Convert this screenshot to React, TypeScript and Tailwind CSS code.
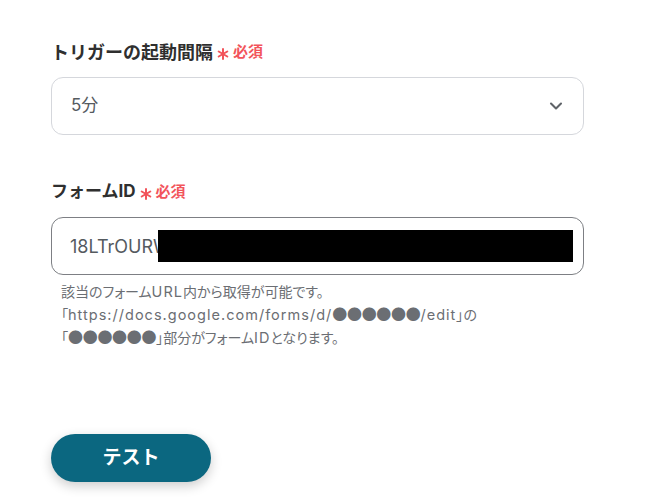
import { ChevronDown } from 'lucide-react';

const Required = () => (
  <span className="ml-[4px] inline-flex items-center text-[#f2545b] text-[15px] font-bold">
    <svg viewBox="0 0 12 12" className="w-[12px] h-[12px] mr-[4px] mt-[3px]" stroke="currentColor" strokeWidth="2" strokeLinecap="round">
      <line x1="6" y1="1" x2="6" y2="11" />
      <line x1="1.7" y1="3.5" x2="10.3" y2="8.5" />
      <line x1="1.7" y1="8.5" x2="10.3" y2="3.5" />
    </svg>
    必須
  </span>
);

const Latin = ({ children }: { children: React.ReactNode }) => (
  <span className="tracking-[0.07em] text-[14.5px]">{children}</span>
);

const Dots = () => (
  <span className="text-[15px] tracking-[-0.02em]" style={{ fontFamily: '"Noto Sans CJK JP", sans-serif' }}>
    ●●●●●●
  </span>
);

const App: React.FC = () => {
  return (
    <div
      className="w-[657px] h-[502px] bg-white pl-[51px] pt-[40px]"
      style={{ fontFamily: 'Inter, "Noto Sans CJK JP", sans-serif' }}
    >
      <div className="w-[533px]">
        <label className="flex items-center h-[24px] text-[18px] font-bold text-[#2f2f2f]">
          トリガーの起動間隔
          <Required />
        </label>
        <div className="mt-[13px] h-[58px] rounded-[12px] border border-[#d5d7dc] flex items-center justify-between pl-[19px] pr-[17px]">
          <span className="text-[17px] text-[#555a5f]">5分</span>
          <ChevronDown className="w-[20px] h-[20px] text-[#5f6368]" strokeWidth={2.5} />
        </div>

        <label className="mt-[45px] flex items-center h-[24px] text-[17px] font-bold text-[#2f2f2f]">
          フォームID
          <Required />
        </label>
        <div className="relative mt-[13px] h-[58px] rounded-[12px] border border-[#7d7f84] flex items-center pl-[18px] pr-[10px]">
          <span className="whitespace-nowrap text-[18px] text-[#555a5f]">18LTrOURW</span>
          <div className="absolute left-[106px] right-[10px] top-[12px] h-[32px] bg-black"></div>
        </div>
        <div className="mt-[6px] pl-[10px] text-[14px] leading-[22px] text-[#6b6e73] [font-feature-settings:'palt']">
          <p>該当のフォーム<Latin>URL</Latin>内から取得が可能です。</p>
          <p>
            「<Latin>https://docs.google.com/forms/d/</Latin>
            <Dots />
            <Latin>/edit</Latin>」の
          </p>
          <p>
            「<Dots />」部分がフォーム<Latin>ID</Latin>となります。
          </p>
        </div>
      </div>

      <button className="mt-[85px] w-[160px] h-[48px] rounded-full bg-[#0b6780] text-white text-[19px] font-bold shadow-[0_4px_12px_rgba(0,0,0,0.2)]">
        テスト
      </button>
    </div>
  );
};

export default App;
